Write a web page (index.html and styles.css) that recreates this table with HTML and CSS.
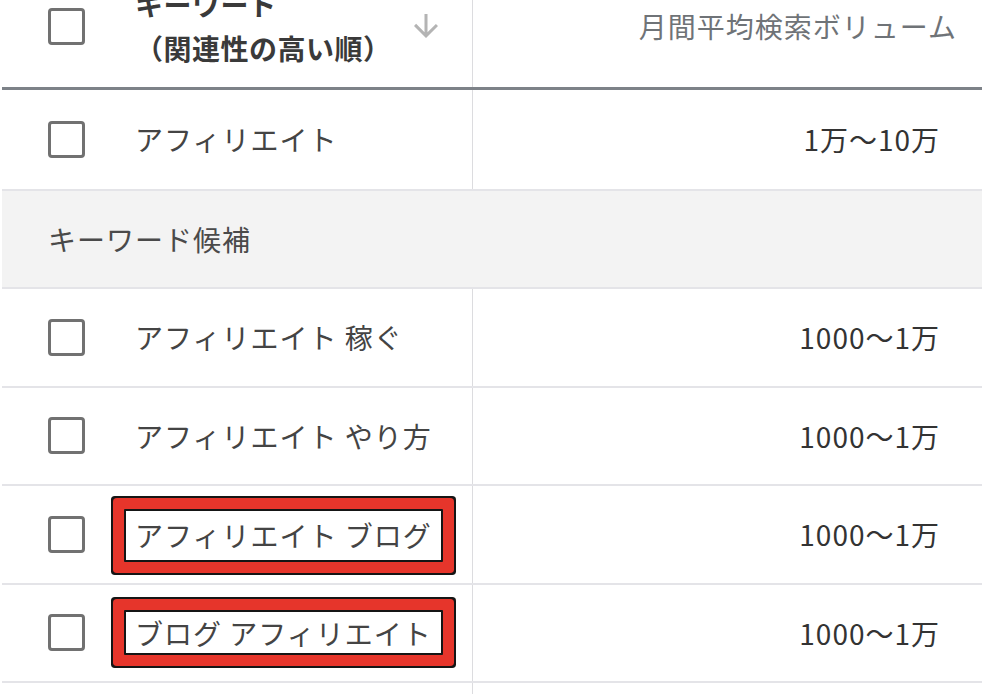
FILE: index.html
```html
<!DOCTYPE html>
<html lang="ja">
<head>
<meta charset="utf-8">
<title>キーワード候補</title>
<link rel="stylesheet" href="styles.css">
</head>
<body>
<div class="table">
  <div class="row head">
    <div class="cell kw">
      <span class="cb"></span>
      <div class="head-title">キーワード<br>（関連性の高い順）</div>
      <svg class="sort" viewBox="0 0 24 24" width="36" height="36"><path d="M20 12l-1.41-1.41L13 16.17V4h-2v12.17l-5.58-5.59L4 12l8 8 8-8z" fill="currentColor"/></svg>
    </div>
    <div class="cell vol head-vol">月間平均検索ボリューム</div>
  </div>

  <div class="row first">
    <div class="cell kw"><span class="cb"></span><span class="kw-text">アフィリエイト</span></div>
    <div class="cell vol">1万～10万</div>
  </div>

  <div class="section">キーワード候補</div>

  <div class="row">
    <div class="cell kw"><span class="cb"></span><span class="kw-text">アフィリエイト 稼ぐ</span></div>
    <div class="cell vol">1000～1万</div>
  </div>
  <div class="row">
    <div class="cell kw"><span class="cb"></span><span class="kw-text">アフィリエイト やり方</span></div>
    <div class="cell vol">1000～1万</div>
  </div>
  <div class="row">
    <div class="cell kw"><span class="cb"></span><span class="kw-text hl hl-tall">アフィリエイト ブログ</span></div>
    <div class="cell vol">1000～1万</div>
  </div>
  <div class="row">
    <div class="cell kw"><span class="cb"></span><span class="kw-text hl hl-short">ブログ アフィリエイト</span></div>
    <div class="cell vol">1000～1万</div>
  </div>
  <div class="row">
    <div class="cell kw"></div>
    <div class="cell vol"></div>
  </div>
</div>
</body>
</html>
```

FILE: styles.css
```css
html, body {
  margin: 0;
  padding: 0;
  background: #ffffff;
  overflow: hidden;
}

body {
  font-family: "Noto Sans CJK JP", "Noto Sans", sans-serif;
  font-size: 28px;
  letter-spacing: 1px;
  color: #3c4043;
}

.table {
  margin-top: -36px;
  padding-left: 2px;
}

.row {
  display: grid;
  grid-template-columns: 471px 1fr;
  height: 96.5px;
  border-bottom: 2px solid #e4e4e8;
}

.row.first {
  height: 98.5px;
}

.row.head {
  height: auto;
  border-bottom: 3px solid #7d8288;
}

.cell {
  display: flex;
  align-items: center;
  line-height: 36px;
}

.cell.kw {
  border-right: 1.5px solid #dcdcdf;
  padding-left: 46px;
}

.head .cell.kw {
  padding: 18px 28px 17px 46px;
}

.cb {
  box-sizing: border-box;
  width: 37px;
  height: 37px;
  border: 3.5px solid #717171;
  border-radius: 4px;
  flex: none;
  margin-right: 50px;
}

.head-title {
  font-weight: 700;
  line-height: 44px;
  letter-spacing: 0.5px;
  color: #3a3a3a;
}

.sort {
  margin-left: auto;
  color: #b4b4b4;
}

.cell.vol {
  justify-content: flex-end;
  padding-right: 42px;
  color: #333333;
}

.cell.head-vol {
  padding-right: 25px;
  color: #6f7377;
}

.kw-text {
  color: #444444;
  white-space: nowrap;
}

.hl {
  position: relative;
  margin-left: -11px;
  padding: 0 9px 0 9px;
  border: 2px solid #151515;
  background: #ffffff;
  box-shadow: 0 0 0 11px #e6352b, 0 0 0 13px #151515;
  border-radius: 1px;
}

.hl-tall {
  padding-top: 6.5px;
  padding-bottom: 6.5px;
  margin-top: 2px;
}

.hl-short {
  padding-top: 2.5px;
  padding-bottom: 2.5px;
}

.section {
  height: 96.5px;
  display: flex;
  align-items: center;
  padding-left: 46px;
  background: #f3f3f3;
  border-bottom: 2px solid #e4e4e8;
  color: #4a4a4a;
}
```
